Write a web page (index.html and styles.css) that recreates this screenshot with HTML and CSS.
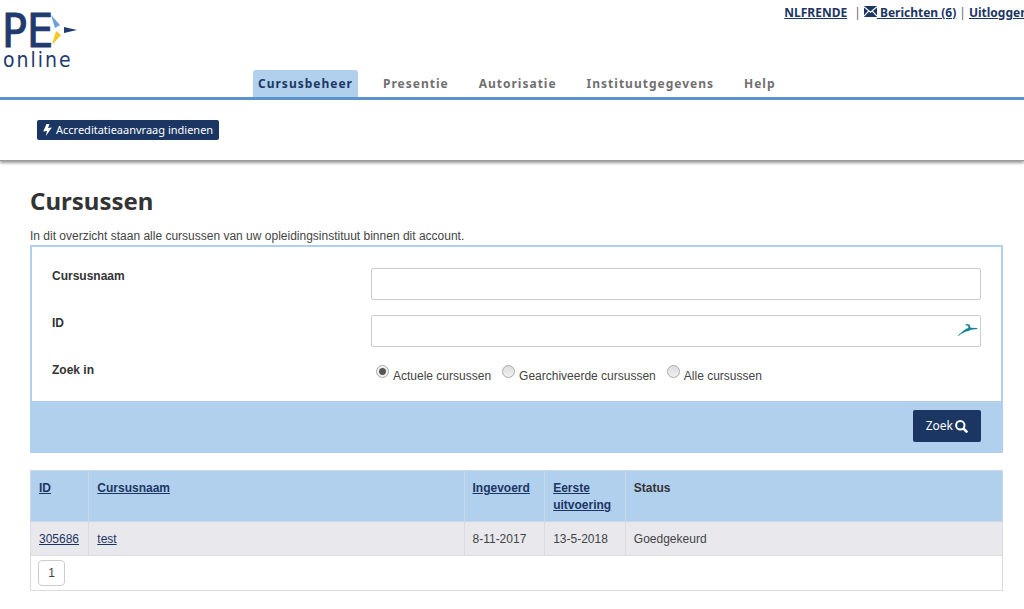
FILE: index.html
```html
<!DOCTYPE html>
<html lang="nl">
<head>
<meta charset="utf-8">
<title>PE-online - Cursussen</title>
<meta name="viewport" content="width=device-width, initial-scale=1">
<link rel="stylesheet" href="styles.css">
</head>
<body>
<header class="site-header">
  <a class="logo" href="#" aria-label="PE online">
    <svg width="96" height="76" viewBox="0 0 96 76" aria-hidden="true">
      <text class="logo-pe" x="2" y="47">PE</text>
      <text class="logo-online" x="3" y="67">online</text>
      <path fill="#6f9fd8" d="M51 15l9 10-5 3z"/>
      <path fill="#1f3a6e" d="M64 27l13 3-13 3z"/>
      <path fill="#f2c91c" d="M56 31l5 4-9 10z"/>
    </svg>
  </a>
  <div class="header-main">
    <div class="user-bar">
      <a href="#">NLFRENDE</a>
      <span class="divider first">|</span>
      <a href="#"><svg class="mail" width="13" height="11" viewBox="0 0 13 11" aria-hidden="true"><path fill="#1c3664" d="M0 0h13v11H0z"/><path fill="none" stroke="#fff" stroke-width="1.2" d="M0 .8l6.500 5.400L13 .8M0 10.200l4.600-5M13 10.200l-4.600-5"/></svg> Berichten (6)</a>
      <span class="divider">|</span>
      <a href="#">Uitloggen</a>
    </div>
    <nav class="main-nav">
      <a class="active" href="#">Cursusbeheer</a>
      <a href="#">Presentie</a>
      <a href="#">Autorisatie</a>
      <a href="#">Instituutgegevens</a>
      <a href="#">Help</a>
    </nav>
  </div>
</header>
<div class="action-bar">
  <button class="action" type="button"><svg width="9" height="12" viewBox="0 0 9 12" aria-hidden="true"><path fill="#fff" d="M3.500 0h3L5 4l4-.5L2.800 12 4 7 .2 7.500z"/></svg>Accreditatieaanvraag indienen</button>
</div>
<main class="content">
  <h1>Cursussen</h1>
  <p class="intro">In dit overzicht staan alle cursussen van uw opleidingsinstituut binnen dit account.</p>
  <form class="search">
    <div class="fields">
      <label class="field-label" for="naam">Cursusnaam</label>
      <div class="control"><input class="text" id="naam" type="text"></div>
      <label class="field-label" for="id">ID</label>
      <div class="control">
        <input class="text" id="id" type="text">
        <svg class="input-mark" width="20" height="14" viewBox="0 0 20 14" aria-hidden="true"><path fill="#158596" d="M0 12.500L5 8l3-2.200 2.500-.8L10 3 7.500 2 8 1l3.500.5L12 3l.7 1.800L19 5l.5 1-6.500.8-2 1-3.500 1L3 11 .6 13z"/></svg>
      </div>
      <span class="field-label" id="scope">Zoek in</span>
      <div class="radios" role="radiogroup" aria-labelledby="scope">
        <input type="radio" name="scope" id="r1" checked><label for="r1">Actuele cursussen</label>
        <input type="radio" name="scope" id="r2"><label for="r2">Gearchiveerde cursussen</label>
        <input type="radio" name="scope" id="r3"><label for="r3">Alle cursussen</label>
      </div>
    </div>
    <div class="form-footer">
      <button class="submit" type="button">Zoek<svg width="13" height="13" viewBox="0 0 13 13" aria-hidden="true"><circle cx="5.300" cy="5.300" r="4.200" fill="none" stroke="#fff" stroke-width="2"/><path stroke="#fff" stroke-width="2.600" stroke-linecap="round" d="M8.800 8.800l2.700 2.700"/></svg></button>
    </div>
  </form>
  <table class="courses">
    <colgroup><col class="c-id"><col class="c-name"><col class="c-date"><col class="c-date"><col></colgroup>
    <thead>
      <tr><th><a href="#">ID</a></th><th><a href="#">Cursusnaam</a></th><th><a href="#">Ingevoerd</a></th><th><a href="#">Eerste uitvoering</a></th><th>Status</th></tr>
    </thead>
    <tbody>
      <tr><td><a href="#">305686</a></td><td><a href="#">test</a></td><td>8-11-2017</td><td>13-5-2018</td><td>Goedgekeurd</td></tr>
    </tbody>
    <tfoot>
      <tr><td colspan="5"><button class="page" type="button">1</button></td></tr>
    </tfoot>
  </table>
</main>
</body>
</html>
```
FILE: styles.css
```css
* { box-sizing: border-box; }
body {
  margin: 0;
  background: #fff;
  color: #444;
  font: 12px/17px "Liberation Sans", Arial, sans-serif;
  overflow-x: hidden;
}
a { color: #1c3664; }
.site-header {
  display: flex;
  border-bottom: 3px solid #5b93cf;
  overflow: hidden;
}
.logo { flex: none; width: 253px; }
.logo svg { display: block; }
.logo-pe { font: 46px "Liberation Sans Narrow", "DejaVu Sans Condensed", sans-serif; fill: #1f3a6e; stroke: #1f3a6e; }
.logo-online { font: 21px "Liberation Sans Narrow", "DejaVu Sans Condensed", sans-serif; fill: #1f3a6e; letter-spacing: 2px; }
.header-main { flex: 1; min-width: 0; }
.user-bar {
  display: flex;
  justify-content: flex-end;
  gap: 3px;
  height: 70px;
  padding-top: 4px;
  margin-right: -4px;
  font: bold 12px/17px "Noto Sans", sans-serif;
  white-space: nowrap;
}
.divider { font-weight: normal; color: #666; }
.divider.first { margin-left: 4px; }
.main-nav {
  display: flex;
  gap: 20px;
  font: bold 12px/27px "Noto Sans", sans-serif;
  letter-spacing: 1px;
}
.main-nav a { padding: 0 5px; color: #707070; text-decoration: none; }
.main-nav .active {
  background: #b1d0ee;
  color: #1c3664;
  border-radius: 3px 3px 0 0;
}
.action-bar {
  padding: 20px 37px;
  border-bottom: 1px solid #999;
  box-shadow: 0 2px 3px #999;
}
button { cursor: pointer; }
.action {
  display: flex;
  align-items: center;
  gap: 4px;
  height: 20px;
  padding: 0 6px;
  border: 0;
  border-radius: 2px;
  background: #1c3664;
  color: #fff;
  font: 11px/20px "Noto Sans", sans-serif;
}
.content { padding: 24px 21px 0 30px; }
h1 {
  margin: 0 0 12px;
  color: #333;
  font: bold 24px/31px "Noto Sans", sans-serif;
}
.intro { margin: 0; }
.search { margin-bottom: 17px; border: 2px solid #b1d0ee; }
.fields {
  display: grid;
  grid-template-columns: 1fr 2fr;
  column-gap: 14px;
  row-gap: 15px;
  padding: 21px 20px 16px;
}
.field-label { font-weight: bold; color: #333; }
.control { position: relative; }
.text {
  display: block;
  width: 100%;
  height: 32px;
  padding: 4px 8px;
  border: 1px solid #ccc;
  border-radius: 2px;
  font: inherit;
}
.input-mark { position: absolute; right: 3px; top: 8px; }
.radios { display: flex; padding: 3px 5px 0; }
.radios input {
  appearance: none;
  width: 13px;
  height: 13px;
  margin: 0 4px 0 0;
  border: 1px solid #aaa;
  border-radius: 50%;
  background: linear-gradient(#ddd, #f0f0f0);
}
.radios input:checked { background: radial-gradient(circle, #555 3px, #eee 4px); }
.radios label { margin-right: 11px; padding-top: 3px; }
.form-footer {
  display: flex;
  justify-content: flex-end;
  padding: 9px 20px;
  background: #b1d0ee;
}
.submit {
  display: flex;
  align-items: center;
  gap: 2px;
  height: 32px;
  padding: 0 13px;
  border: 0;
  border-radius: 2px;
  background: #1c3664;
  color: #fff;
  font: 12px/30px "Noto Sans", sans-serif;
}
.courses {
  width: 100%;
  border: 1px solid #d8dce0;
  border-collapse: collapse;
  table-layout: fixed;
}
.c-id { width: 6%; }
.c-name { width: 38.6%; }
.c-date { width: 8.3%; }
.courses th, .courses td { padding: 9px 8px 7px; text-align: left; vertical-align: top; }
.courses th { background: #b1d0ee; color: #333; border: 1px solid #c8d8e8; }
.courses tbody td { background: #e8e8ed; border: 1px solid #dcdce0; }
.courses tfoot td { padding: 4px 7px; }
.page {
  display: block;
  width: 27px;
  height: 26px;
  border: 1px solid #ccc;
  border-radius: 4px;
  background: #fff;
  color: #444;
  font: 12px "Liberation Sans", Arial, sans-serif;
}
```
